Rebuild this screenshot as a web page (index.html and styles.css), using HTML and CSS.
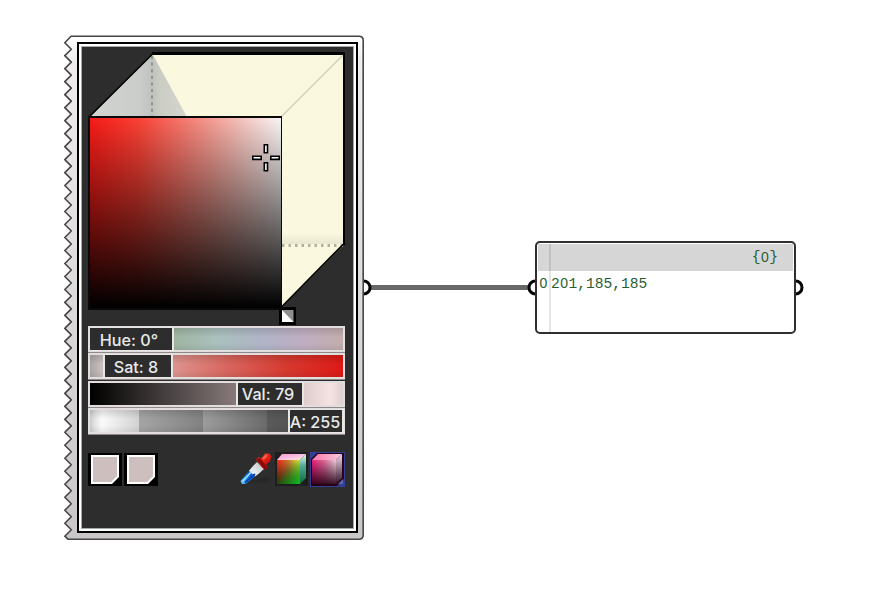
FILE: index.html
```html
<!DOCTYPE html>
<html lang="en">
<head>
<meta charset="utf-8">
<title>Colour picker</title>
<link rel="stylesheet" href="styles.css">
</head>
<body>
<main class="canvas">
  <svg class="wires" width="896" height="614" viewBox="0 0 896 614">
    <path class="wire" d="M370 287.5H531"/>
    <circle class="port" cx="363.5" cy="287.5" r="6.5"/>
    <circle class="port" cx="535.5" cy="287.5" r="6.5"/>
    <circle class="port" cx="795.5" cy="287.5" r="6.5"/>
  </svg>

  <section class="picker">
    <svg class="frame" id="frame" width="302" height="506" viewBox="63 35 302 506">
      <defs>
        <linearGradient id="frameFill" x2="0" y2="1"><stop stop-color="#fff"/><stop offset=".05" stop-color="#efeded"/><stop offset=".5" stop-color="#dddbdc"/><stop offset="1" stop-color="#c8c6c7"/></linearGradient>
      </defs>
      <path id="edge" fill="url(#frameFill)" stroke="#474546" stroke-width="1.6" stroke-linejoin="round"/>
    </svg>
    <div class="well">
      <div class="stage">
        <svg class="cube" width="258" height="275" viewBox="88 51 258 275">
          <defs>
            <linearGradient id="shadeLeft" x1="0" x2="1"><stop stop-color="#d1d4d1"/><stop offset=".5" stop-color="#cacdc9"/><stop offset=".64" stop-color="#bfc2bd"/><stop offset=".72" stop-color="#cbccc4"/><stop offset="1" stop-color="#d5d6ce"/></linearGradient>
            <linearGradient id="shadeLow" x2="0" y2="1"><stop stop-color="#faf8df"/><stop offset="1" stop-color="#e8e6cf"/></linearGradient>
          </defs>
          <path d="M152.500 54H343.500V245L281 308V117H90Z" fill="#faf8df"/>
          <path d="M281 233H343V244H281Z" fill="url(#shadeLow)"/>
          <path d="M152.500 54L187 117H90Z" fill="url(#shadeLeft)"/>
          <path d="M281 117L343 55" stroke="#d0cebd" stroke-width="1.4"/>
          <path d="M152 56V117" stroke="#929491" stroke-width="2" stroke-dasharray="3 3.6"/>
          <path d="M282 245.500H343" stroke="#b2b0a0" stroke-width="3" stroke-dasharray="2.500 4"/>
          <path d="M89 117L152.500 54M343.500 244L281 307.500" stroke="#000" stroke-width="1.7"/>
          <path d="M152 53.500H344V245" fill="none" stroke="#000" stroke-width="2"/>
          <path d="M152 53.500H344" stroke="#000" stroke-width="3"/>
          <path d="M279 307H296V325H279Z" fill="#000"/>
          <path d="M282 310H293.500V322H282Z" fill="#8f8f8f"/>
          <path d="M282 310L293.500 322H282Z" fill="#fff"/>
        </svg>
        <div class="field"></div>
        <svg class="cross" width="28" height="28" viewBox="0 0 28 28">
          <path d="M12.300 .8h3.200v8h-3.200zM12.300 18.800h3.200v8h-3.200zM.8 12.200h8.400v3.200H.8zM18.800 12.200h8.400v3.200h-8.400z" fill="#fff" stroke="#000" stroke-width="1.600"/>
        </svg>
      </div>

      <div class="sliders">
        <div class="slider hue"><span class="knob">Hue: 0°</span></div>
        <div class="slider sat"><span class="knob">Sat: 8</span></div>
        <div class="slider val"><span class="knob">Val: 79</span></div>
        <div class="slider alpha"><span class="knob">A: 255</span></div>
      </div>

      <div class="tools">
        <svg class="swatch" width="34" height="33"><path d="M0 0H34V33H0Z"/><path d="M3 2H31V24L24 31H3Z" fill="#fff"/><path d="M5 4H29V23L23 29H5Z" fill="#cdbfbe"/></svg>
        <svg class="swatch" width="34" height="33"><path d="M0 0H34V33H0Z"/><path d="M3 2H31V24L24 31H3Z" fill="#fff"/><path d="M5 4H29V23L23 29H5Z" fill="#cdbfbe"/></svg>
        <svg class="dropper" width="34" height="35" viewBox="0 0 34 35">
          <defs>
            <linearGradient id="glass" x1="0" y1="1" x2="1" y2="0"><stop stop-color="#73d8ff"/><stop offset=".22" stop-color="#169df5"/><stop offset=".46" stop-color="#0c56cd"/><stop offset=".5" stop-color="#eef3f5"/><stop offset="1" stop-color="#b8bdc0"/></linearGradient>
            <linearGradient id="bulb" x1="0" y1="0" x2="1" y2="1"><stop stop-color="#ff4c32"/><stop offset=".55" stop-color="#dc1d13"/><stop offset="1" stop-color="#830000"/></linearGradient>
          </defs>
          <path d="M7 31L26 25L32 26V30Z" fill="#272727"/>
          <path d="M1.500 29L14 14L18 10L25 17L20 21.500L7 31.500L3 32Z" fill="url(#glass)"/>
          <path d="M3.500 29.500L13 19" stroke="#a9e4ff" stroke-width="1.500"/>
          <path d="M6 30.500L16 22" stroke="#063bb8" stroke-width="2"/>
          <path d="M17 7.500L20 5L22 6.500L26 1.500H30L32.500 4.500L31 9.500L27 12.500L29 15L27 17.500L23 15.500Z" fill="url(#bulb)"/>
          <path d="M17 7L21 6L28 15L26 18Z" fill="#8b0808"/>
          <path d="M24 7L28 3" stroke="#ff6850" stroke-width="2"/>
        </svg>
        <svg class="mode" width="34" height="35" viewBox="0 0 34 35">
          <defs>
            <linearGradient id="rg"><stop stop-color="#fa2418"/><stop offset=".5" stop-color="#c97c31"/><stop offset="1" stop-color="#d9ef39"/></linearGradient>
            <linearGradient id="rgDown" x2="0" y2="1"><stop stop-color="#052b08" stop-opacity="0"/><stop offset="1" stop-color="#09330c" stop-opacity=".9"/></linearGradient>
            <linearGradient id="greenIn" x2="1" y2="1"><stop offset=".4" stop-color="#11bd19" stop-opacity="0"/><stop offset="1" stop-color="#11c927" stop-opacity=".9"/></linearGradient>
            <linearGradient id="topA" x2="1" y2="1"><stop stop-color="#ff9fb5"/><stop offset=".4" stop-color="#f5b5e5"/><stop offset="1" stop-color="#fff1d0"/></linearGradient>
            <linearGradient id="sideA" x2="0" y2="1"><stop stop-color="#e8fff0"/><stop offset=".4" stop-color="#52a795"/><stop offset="1" stop-color="#056d35"/></linearGradient>
          </defs>
          <path d="M0 0H33V34H0Z" fill="#1e1e1e"/>
          <path d="M2 8L7 2H31L25 8Z" fill="url(#topA)"/>
          <path d="M2 8H25V32H2Z" fill="url(#rg)"/><path d="M2 8H25V32H2Z" fill="url(#rgDown)"/><path d="M2 8H25V32H2Z" fill="url(#greenIn)"/>
          <path d="M25 8L31 2V26L25 32Z" fill="url(#sideA)"/>
        </svg>
        <svg class="mode on" width="35" height="35" viewBox="0 0 35 35">
          <defs>
            <linearGradient id="pink"><stop stop-color="#f41b79"/><stop offset=".55" stop-color="#d9709b"/><stop offset="1" stop-color="#edcddd"/></linearGradient>
            <linearGradient id="pinkDown" x2="0" y2="1"><stop stop-color="#200013" stop-opacity="0"/><stop offset="1" stop-color="#250013" stop-opacity=".9"/></linearGradient>
            <linearGradient id="topB"><stop stop-color="#f678a7"/><stop offset="1" stop-color="#f5c9df"/></linearGradient>
            <linearGradient id="sideB" x2="0" y2="1"><stop stop-color="#f5d6e7"/><stop offset="1" stop-color="#321026"/></linearGradient>
          </defs>
          <path d="M0 0H35V35H0Z" fill="#333f97"/>
          <path d="M7 1H34V27L27 34H1V7Z" fill="#280016"/>
          <path d="M2 8L8 2H32L26 8Z" fill="url(#topB)"/>
          <path d="M2 8H26V32H2Z" fill="url(#pink)"/><path d="M2 8H26V32H2Z" fill="url(#pinkDown)"/>
          <path d="M26 8L32 2V26L26 32Z" fill="url(#sideB)"/>
          <path d="M28 32L33 27V32Z" fill="#5966aa"/>
        </svg>
      </div>
    </div>
  </section>

  <section class="panel">
    <header class="path">{<b>0</b>}</header>
    <div class="row"><span class="index"><b>0</b></span><span class="value">2<b>0</b>1,185,185</span></div>
  </section>
</main>
<script src="edge.js"></script>
</body>
</html>
```
FILE: styles.css
```css
* { box-sizing: border-box; }
body { margin: 0; background: #fff; }
.canvas { position: relative; width: 896px; height: 614px; overflow: hidden; }
.wires { position: absolute; left: 0; top: 0; }
.wire { stroke: #696768; stroke-width: 5; }
.port { fill: #fff; stroke: #000; stroke-width: 3; }

.picker { position: absolute; left: 63px; top: 35px; width: 302px; height: 506px; padding: 7px 7px 7px 14px; }
.frame { position: absolute; left: 0; top: 0; }
.well {
  position: relative; width: 281px; height: 491px; padding: 7px 7px 0;
  background: #2d2d2d; border: 2px solid #000;
  box-shadow: inset 0 0 0 2px #fff, inset 0 0 0 3px #a6aaa6;
}
.stage { position: relative; height: 275px; margin-left: 2px; }
.cube { display: block; }
.field {
  position: absolute; left: 0; top: 65px; width: 193.500px; height: 194px;
  border: 2px solid #090909; border-right-width: 1.500px;
  background: linear-gradient(to bottom, transparent, #000), linear-gradient(to right, #f61b17, #fa4034 25%, #f4a096 65%, #f8f6f6);
}
.cross { position: absolute; left: 164px; top: 93px; }

.sliders { display: grid; grid-template-rows: repeat(4, 26px); row-gap: 1.400px; margin-left: 2px; width: 257px; }
.slider { display: flex; border: 2px solid #e3dede; box-shadow: 0 1px 0 #908788; }
.knob {
  display: flex; align-items: center; justify-content: center;
  margin-block: -1px; border: 0 solid #e9e6e6; border-width: 1px 2px;
  background: #2d2d2d; color: #e9e9e9; padding: 1px 4px 0 0;
  font: 500 16.200px/20px Inter, sans-serif; white-space: nowrap;
}
.hue { background: linear-gradient(#0002, #0000 40%, #0000 70%, #0001), linear-gradient(90deg, #9fb4a0 32%, #a9c0bd 50%, #b1b3c7 70%, #bfaec2 84%, #c3adad); }
.hue .knob { width: 84px; border-left: 0; }
.sat { background: linear-gradient(#0002, #0000 40%, #0000 70%, #0001), linear-gradient(90deg, #aaa5a5, #d2c7c7 6%, #dc918b 34%, #d6645c 55%, #d53a30 77%, #dc1915); }
.sat .knob { width: 70px; margin-left: 13px; }
.val { background: linear-gradient(90deg, #000, #171514 10%, #857879 57%, #d9c7c7 82%, #f5e3e3 95%, #ddd0d0); }
.val .knob { width: 68px; margin-left: 146px; }
.alpha {
  background:
    linear-gradient(#0002, #0000 40%, #0000 70%, #0001),
    linear-gradient(90deg, #ccc 0, #e8e8e8 6px, #fafafa 12px, #d2d2d2 49px, #a5a5a5 49px, #818181 113px, #9c9c9c 113px, #6a6a6a 177px, #5a5a5a 177px, #484848 100%);
}
.alpha .knob { width: 56px; margin-left: auto; margin-right: -1px; padding-right: 2px; }

.tools { display: flex; align-items: center; width: 257px; margin: 17px 0 0 2px; height: 36px; }
.swatch + .swatch { margin-left: 2px; }
.dropper { margin-left: 81px; }
.mode { margin-left: 2px; }
.mode.on { margin-left: 1px; }

.panel {
  position: absolute; left: 535px; top: 241px; width: 261px; height: 93px; padding: 1px 1px 0;
  background: #fff; border: 2px solid #302e30; border-radius: 5px; overflow: hidden;
  font: 14.600px/27px "Liberation Mono", monospace; color: #2a5c34;
}
.path { display: flex; justify-content: flex-end; height: 27px; padding-right: 15px; background: #d6d6d6; }
/* Plain, undotted zero set in a monospace cell. */
.panel b { display: inline-block; width: 8.760px; text-align: center; font-family: "Liberation Sans", sans-serif; font-weight: 400; font-size: 14px; line-height: 1; }
.path b { line-height: 27px; }
.row { display: flex; }
.index { width: 11px; padding-left: 1px; }
.value { padding-left: 2px; }
.panel::after { content: ""; position: absolute; left: 12px; top: 1px; bottom: 0; width: 2px; background: #0000001a; }
```
FILE: edge.js
```javascript
// The node's left side is a torn, zigzag edge.
const first = 42.7, last = 536.2, teeth = 38;
const pitch = (last - first) / teeth;
let d = `M68 539.200L64.800 ${last}`;
for (let i = teeth; i > 0; i--) {
  const y = first + i * pitch;
  d += `L71.300 ${y - pitch / 2}L64.800 ${y - pitch}`;
}
d += "L71 36.200H359Q363.200 36.200 363.200 40.500V535Q363.200 539.200 359 539.200Z";
document.getElementById("edge").setAttribute("d", d);
```
